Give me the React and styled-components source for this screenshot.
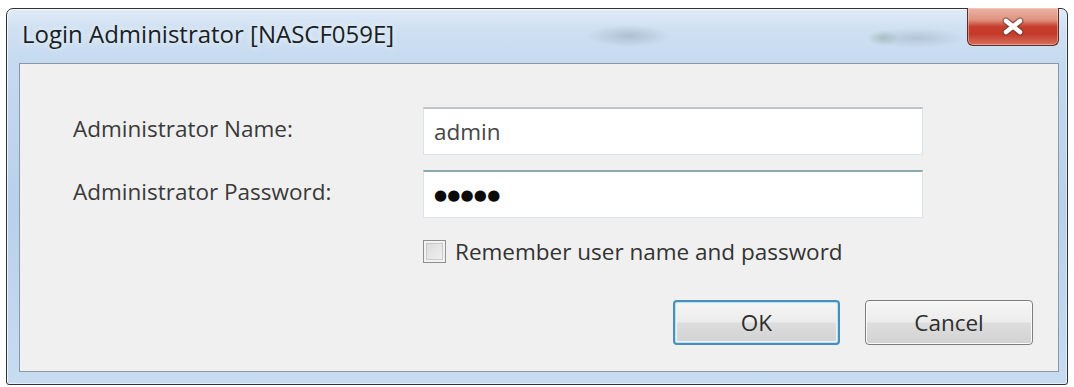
import React from "react";
import styled, { createGlobalStyle } from "styled-components";

const Global = createGlobalStyle`
  html, body { margin: 0; padding: 0; background: #ffffff; }
  body { font-family: "Open Sans", "Noto Sans", "Liberation Sans", sans-serif; }
  * { box-sizing: border-box; }
`;

const Page = styled.div`
  width: 1074px;
  height: 387px;
  padding: 8px 6px 2px 6px;
  background: #ffffff;
`;

const Window = styled.div`
  width: 1062px;
  height: 377px;
  border: 1px solid #2e3236;
  border-radius: 7px 7px 3px 3px;
  padding: 0 8px 12px 12px;
  display: flex;
  flex-direction: column;
  background:
    radial-gradient(ellipse 42px 11px at 622px 27px, rgba(110,125,140,0.32), transparent),
    radial-gradient(ellipse 48px 10px at 910px 29px, rgba(110,125,140,0.26), transparent),
    radial-gradient(ellipse 16px 8px at 876px 29px, rgba(100,145,100,0.3), transparent),
    linear-gradient(180deg, #dfeaf6 0px, #cfe0f2 20px, #c5daf0 54px, #b8d0ea 200px, #c7dcf1 376px);
  box-shadow: inset 1px 1px 0 rgba(255,255,255,0.7), inset -1px -1px 0 rgba(255,255,255,0.5);
`;

const TitleBar = styled.div`
  height: 54px;
  display: flex;
  align-items: center;
  padding-left: 3px;
`;

const Title = styled.div`
  font-family: "Open Sans", "Noto Sans", sans-serif;
  font-size: 24px;
  color: #1a1f26;
  text-shadow: 0 0 6px rgba(255,255,255,0.9);
  margin-top: -5px;
`;

const CloseButton = styled.div`
  margin-left: auto;
  align-self: flex-start;
  margin-top: -1px;
  width: 92px;
  height: 38px;
  border: 1px solid #5e2a24;
  border-top: none;
  border-radius: 0 0 6px 6px;
  background: linear-gradient(180deg, #eab4a6 0%, #df9280 32%, #c63e2e 50%, #c3392a 70%, #d6705b 100%);
  box-shadow: inset 0 0 0 1px rgba(255,220,210,0.45);
  display: flex;
  align-items: center;
  justify-content: center;
`;

const Panel = styled.div`
  flex: 1;
  border: 1px solid #8a98a8;
  background: #f0f0f0;
  padding: 43px 25px 0 53px;
  display: flex;
  flex-direction: column;
`;

const Form = styled.div`
  display: grid;
  grid-template-columns: 350px 500px;
  row-gap: 15px;
  align-items: center;
`;

const Label = styled.div`
  font-family: "Open Sans", "Noto Sans", sans-serif;
  font-size: 22.5px;
  color: #3a3a3a;
  margin-top: -5px;
`;

const Field = styled.div`
  height: 48px;
  background: #ffffff;
  border: 1px solid #dde2e8;
  border-top: 2px solid ${(p) => (p.$focused ? "#8fa9b1" : "#bfc4ca")};
  padding-left: 10px;
  display: flex;
  align-items: center;
  font-family: "Open Sans", "Noto Sans", sans-serif;
  font-size: 22.5px;
  color: #454545;
`;

const Dots = styled.span`
  font-family: "DejaVu Sans", sans-serif;
  font-size: 15px;
  letter-spacing: 0.2px;
  color: #0a0a0a;
  margin-top: 1px;
`;

const CheckRow = styled.label`
  grid-column: 2;
  margin-top: 7px;
  height: 23px;
  display: flex;
  align-items: center;
  gap: 9px;
  font-family: "Open Sans", "Noto Sans", sans-serif;
  font-size: 22.5px;
  line-height: 23px;
  color: #333;
`;

const Box = styled.span`
  width: 23px;
  height: 23px;
  border: 1px solid #8f8f8f;
  background: linear-gradient(135deg, #d8d8d8, #f4f4f4);
  box-shadow: inset 0 0 0 2px #f2f2f2, inset 0 0 0 3px #c9c9c9;
  display: inline-block;
  flex: none;
`;

const ButtonRow = styled.div`
  margin-top: 37px;
  display: flex;
  justify-content: flex-end;
  gap: 25px;
`;

const Button = styled.div`
  width: ${(p) => (p.$default ? "167px" : "168px")};
  height: 45px;
  border-radius: 4px;
  border: ${(p) => (p.$default ? "2px solid #4b8fb8" : "1px solid #7e7e7e")};
  background: linear-gradient(180deg, #f6f6f6 0%, #ececec 48%, #dddddd 52%, #d2d2d2 100%);
  box-shadow: ${(p) =>
    p.$default
      ? "inset 0 0 0 1px #b6e2f5, inset 0 0 0 2px #eaf6fb"
      : "inset 0 0 0 1px #fbfbfb"};
  display: flex;
  align-items: center;
  justify-content: center;
  font-family: "Open Sans", "Noto Sans", sans-serif;
  font-size: 22.5px;
  color: #2e2e2e;
`;

export default function App() {
  return (
    <>
      <Global />
      <Page>
        <Window>
          <TitleBar>
            <Title>Login Administrator [NASCF059E]</Title>
            <CloseButton>
              <svg width="24" height="19" viewBox="0 0 24 19">
                <path d="M5 4 L19 15 M19 4 L5 15" stroke="#5b3a36" strokeWidth="7" strokeLinecap="round" opacity="0.6" />
                <path d="M5 4 L19 15 M19 4 L5 15" stroke="#ffffff" strokeWidth="4.5" strokeLinecap="round" />
              </svg>
            </CloseButton>
          </TitleBar>
          <Panel>
            <Form>
              <Label>Administrator Name:</Label>
              <Field>admin</Field>
              <Label>Administrator Password:</Label>
              <Field $focused>
                <Dots>●●●●●</Dots>
              </Field>
              <CheckRow>
                <Box />
                Remember user name and password
              </CheckRow>
            </Form>
            <ButtonRow>
              <Button $default>OK</Button>
              <Button>Cancel</Button>
            </ButtonRow>
          </Panel>
        </Window>
      </Page>
    </>
  );
}
